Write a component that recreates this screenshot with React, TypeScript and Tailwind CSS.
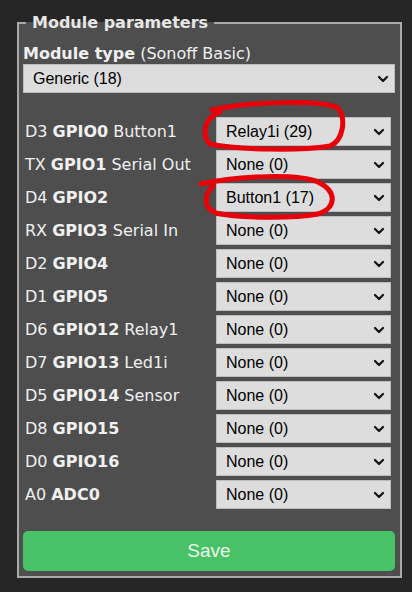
import React from 'react';

const rows: { pin: string; gpio: string; fn?: string; value: string }[] = [
  { pin: 'D3', gpio: 'GPIO0', fn: 'Button1', value: 'Relay1i (29)' },
  { pin: 'TX', gpio: 'GPIO1', fn: 'Serial Out', value: 'None (0)' },
  { pin: 'D4', gpio: 'GPIO2', value: 'Button1 (17)' },
  { pin: 'RX', gpio: 'GPIO3', fn: 'Serial In', value: 'None (0)' },
  { pin: 'D2', gpio: 'GPIO4', value: 'None (0)' },
  { pin: 'D1', gpio: 'GPIO5', value: 'None (0)' },
  { pin: 'D6', gpio: 'GPIO12', fn: 'Relay1', value: 'None (0)' },
  { pin: 'D7', gpio: 'GPIO13', fn: 'Led1i', value: 'None (0)' },
  { pin: 'D5', gpio: 'GPIO14', fn: 'Sensor', value: 'None (0)' },
  { pin: 'D8', gpio: 'GPIO15', value: 'None (0)' },
  { pin: 'D0', gpio: 'GPIO16', value: 'None (0)' },
  { pin: 'A0', gpio: 'ADC0', value: 'None (0)' },
];

function Chevron() {
  return (
    <svg width="12" height="8" viewBox="0 0 12 8" className="shrink-0">
      <path d="M2 2 L6 6 L10 2" fill="none" stroke="#111" strokeWidth="2.2" strokeLinecap="round" strokeLinejoin="round" />
    </svg>
  );
}

function FakeSelect({ value, className }: { value: string; className?: string }) {
  return (
    <div
      className={`flex h-[29px] items-center justify-between border border-[#bdbdbd] bg-[#dddddd] pl-[9px] pr-[5px] text-[16px] text-black [font-family:'Liberation_Sans',Arial,sans-serif] ${className ?? ''}`}
    >
      <span>{value}</span>
      <Chevron />
    </div>
  );
}

export default function App() {
  return (
    <div className="relative h-[592px] w-[412px] overflow-hidden bg-[#262626] pt-[13px] text-[#f0f0f0] [font-family:'DejaVu_Sans',Verdana,sans-serif]">
      <fieldset className="ml-[17px] h-[565px] w-[385px] border-2 border-[#a9a9a9] bg-[#4e4e4e] px-[4px]">
        <legend className="ml-[3px] px-[6px] text-[16px] font-bold leading-[20px] text-[#e6e6e6]">
          Module parameters
        </legend>

        {/* ---------------- Module type ---------------- */}
        <div className="mt-[11px] text-[16px] leading-[20px]">
          <span className="font-bold">Module type</span> (Sonoff Basic)
        </div>
        <FakeSelect value="Generic (18)" className="w-[372px]" />

        {/* ---------------- GPIO rows ---------------- */}
        <div className="mt-[24px] flex flex-col gap-[4px]">
          {rows.map(r => (
            <div key={r.gpio} className="flex items-center">
              <div className="w-[193px] pl-[2px] text-[16px] leading-[19px] whitespace-nowrap">
                {r.pin} <span className="font-bold">{r.gpio}</span>
                {r.fn ? ` ${r.fn}` : ''}
              </div>
              <FakeSelect value={r.value} className="w-[175px]" />
            </div>
          ))}
        </div>

        <button
          type="button"
          className="mt-[22px] flex h-[40px] w-[372px] items-center justify-center rounded-[5px] bg-[#47c266] text-[19px] text-[#eef5ef] [font-family:'Liberation_Sans',Arial,sans-serif]"
        >
          Save
        </button>
      </fieldset>

      {/* red hand-drawn annotations */}
      <svg className="pointer-events-none absolute left-0 top-0" width="412" height="592" viewBox="0 0 412 592">
        <path
          d="M212 110 C250 101 322 100 338 108 C346 118 344 140 330 146 C300 151 240 150 210 144 C202 136 203 118 220 112"
          fill="none"
          stroke="#e8000b"
          strokeWidth="5"
          strokeLinecap="round"
        />
        <path
          d="M201 184 C240 175 300 174 318 182 C338 192 336 208 318 214 C290 219 240 218 216 213 C204 208 203 196 213 186"
          fill="none"
          stroke="#e8000b"
          strokeWidth="5"
          strokeLinecap="round"
        />
      </svg>
    </div>
  );
}
